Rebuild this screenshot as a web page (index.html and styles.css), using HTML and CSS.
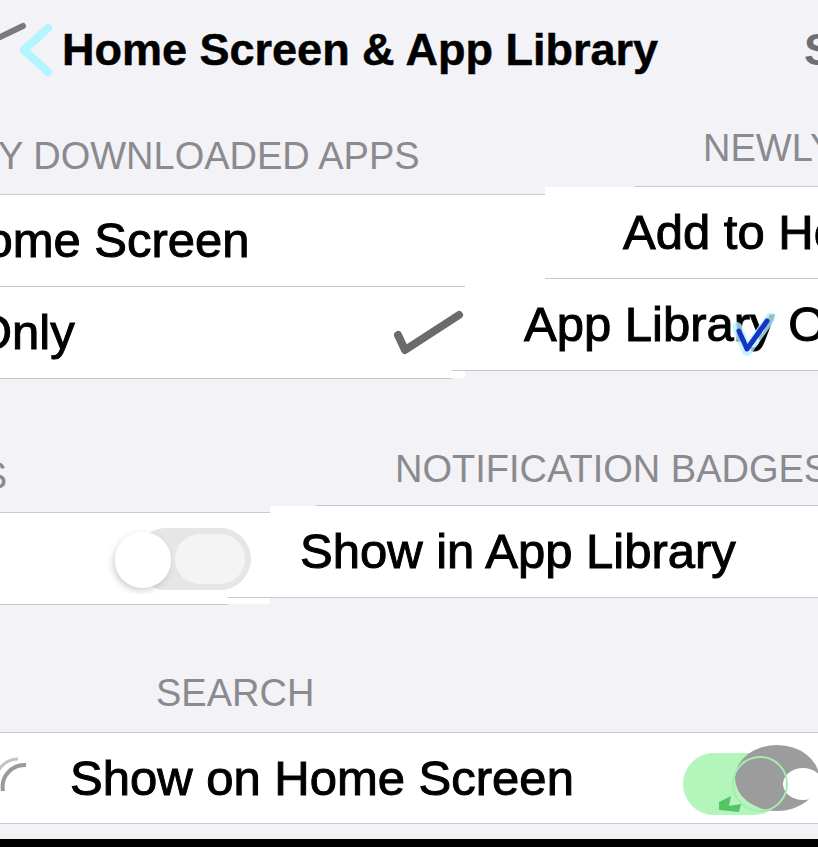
FILE: index.html
```html
<!DOCTYPE html>
<html lang="en">

<head>
    <meta charset="UTF-8">
    <meta name="viewport" content="width=device-width, initial-scale=1.0">
    <title>Home Screen &amp; App Library</title>
    <link rel="stylesheet" href="styles.css">
</head>

<body>
    <div class="screen">
        <header class="nav">
            <svg class="back" width="62" height="100" viewBox="0 0 62 100">
                <line x1="0" y1="37" x2="23" y2="26" stroke="#7a7a7e" stroke-width="6" stroke-linecap="round" />
                <polyline points="48,28 24,50 48,72" fill="none" stroke="#b2f5fc" stroke-width="8"
                    stroke-linecap="round" stroke-linejoin="round" />
            </svg>
            <h1 class="title">Home Screen &amp; App Library</h1>
            <span class="nav_edge">S</span>
        </header>

        <!-- newly downloaded apps -->
        <section class="group shift_8">
            <div class="line caption caption_first">
                <div class="half w635"><span class="label label_newly_left">NEWLY DOWNLOADED APPS</span></div>
                <div class="half right"><span class="label label_newly_right">NEWLY DOWNLOADED APPS</span></div>
            </div>
            <div class="line sep">
                <div class="half w635"></div>
                <div class="half right"></div>
            </div>
            <div class="line cell">
                <div class="half w545"><span class="cell_text home_left">Home Screen</span></div>
                <div class="half right"><span class="cell_text add_right">Add to Home Screen</span></div>
            </div>
            <div class="line sep">
                <div class="half w545"></div>
                <div class="half right"></div>
            </div>
            <div class="line cell">
                <div class="half w465">
                    <span class="cell_text only_left">Only</span>
                    <svg class="check" width="75" height="50" viewBox="0 0 75 50">
                        <polyline points="8,27 15,42 69,7" fill="none" stroke="#6b6b6e" stroke-width="8"
                            stroke-linecap="round" stroke-linejoin="round" />
                    </svg>
                </div>
                <div class="half right mark_holder">
                    <span class="cell_text library_right">App Library Only</span>
                    <svg class="blue_mark" width="42" height="44" viewBox="0 0 42 44">
                        <polyline points="4,14 14,38 38,4" fill="none" stroke="#b4f3ff" stroke-width="10"
                            stroke-linecap="round" stroke-linejoin="round" opacity="0.8" />
                        <polyline points="6,18 14,36 34,8" fill="none" stroke="#1733c4" stroke-width="5"
                            stroke-linecap="round" stroke-linejoin="round" />
                    </svg>
                </div>
            </div>
            <div class="line sep">
                <div class="half w452"></div>
                <div class="half right"></div>
            </div>
        </section>

        <!-- notification badges -->
        <section class="group shift_7">
            <div class="line caption caption_second">
                <div class="half w320"><span class="label label_badges_left">NOTIFICATION BADGES</span></div>
                <div class="half right"><span class="label label_badges_right">NOTIFICATION BADGES</span></div>
            </div>
            <div class="line sep">
                <div class="half w316"></div>
                <div class="half right"></div>
            </div>
            <div class="line cell">
                <div class="half w270">
                    <svg class="toggle_off" width="150" height="70" viewBox="0 0 150 70">
                        <defs>
                            <filter id="knob_shadow" x="-30%" y="-30%" width="160%" height="160%">
                                <feDropShadow dx="-2" dy="3" stdDeviation="3" flood-color="#000" flood-opacity="0.18" />
                            </filter>
                        </defs>
                        <rect x="30" y="4" width="116" height="62" rx="31" fill="#e6e6e8" />
                        <rect x="70" y="10" width="70" height="50" rx="25" fill="#f4f4f5" />
                        <circle cx="38" cy="36" r="28" fill="#fff" filter="url(#knob_shadow)" />
                    </svg>
                </div>
                <div class="half right"><span class="cell_text badges_right">Show in App Library</span></div>
            </div>
            <div class="line sep">
                <div class="half w228"></div>
                <div class="half right"></div>
            </div>
        </section>

        <!-- search -->
        <section class="group">
            <div class="line caption caption_third">
                <div class="half right"><span class="label label_search">SEARCH</span></div>
            </div>
            <div class="line sep">
                <div class="half right"></div>
            </div>
            <div class="line cell">
                <div class="half right">
                    <svg class="edge_arcs" width="30" height="50" viewBox="0 0 30 50">
                        <path d="M3 38 A 22 22 0 0 1 26 12" fill="none" stroke="#9a9a9c" stroke-width="4" />
                        <path d="M-4 30 A 22 22 0 0 1 18 6" fill="none" stroke="#c4c4c6" stroke-width="3" />
                    </svg>
                    <span class="cell_text search_text">Show on Home Screen</span>
                    <svg class="toggle_on" width="135" height="80" viewBox="0 0 135 80">
                        <rect x="0" y="15" width="102" height="62" rx="31" fill="#b4f5bc" />
                        <path d="M36 64 L48 58 L46 68 L58 66 L56 74 L36 72 Z" fill="#55c463" />
                        <ellipse cx="94" cy="40" rx="42" ry="33" fill="#9c9c9c" />
                        <ellipse cx="120" cy="46" rx="20" ry="16" fill="#fff" />
                        <circle cx="77" cy="46" r="27" fill="none" stroke="#a6ecae" stroke-width="2" />
                    </svg>
                </div>
            </div>
            <div class="line sep">
                <div class="half right"></div>
            </div>
        </section>

        <div class="bottom_gap"></div>
        <div class="bottom_bar"></div>
    </div>
</body>

</html>
```

FILE: styles.css
```css
body {
    margin: 0;
    background-color: #f2f2f7;
    font-family: "Liberation Sans", Arial, sans-serif;
    color: #000;
}

.screen {
    width: 818px;
    height: 847px;
    overflow: hidden;
    display: flex;
    flex-direction: column;
}

/* nav bar */
.nav {
    height: 100px;
    display: flex;
    align-items: flex-start;
    overflow: hidden;
    flex-shrink: 0;
}

.back {
    flex-shrink: 0;
}

.title {
    margin: 27px 0 0 0;
    font-size: 45px;
    line-height: 45px;
    font-weight: bold;
    white-space: nowrap;
    -webkit-text-stroke: 0.5px #000;
}

.nav_edge {
    margin: 27px -16px 0 auto;
    font-size: 45px;
    line-height: 45px;
    font-weight: bold;
    color: #6e6e72;
}

/* grouped rows */
.group {
    display: flex;
    flex-direction: column;
    flex-shrink: 0;
}

.line {
    display: flex;
}

.half {
    display: flex;
    align-items: center;
    overflow: hidden;
    white-space: nowrap;
    flex-shrink: 0;
}

.half.right {
    flex: 1;
}

.shift_8 .right {
    transform: translateY(-8px);
}

.shift_7 .right {
    transform: translateY(-7px);
}

.w635 { width: 635px; }
.w545 { width: 545px; }
.w465 { width: 465px; }
.w452 { width: 452px; }
.w320 { width: 320px; }
.w316 { width: 316px; }
.w270 { width: 270px; }
.w228 { width: 228px; }

.caption .half {
    align-items: flex-end;
}

.caption_first .half {
    height: 75px;
    padding-bottom: 19px;
}

.caption_second .half {
    height: 116px;
    padding-bottom: 17px;
}

.caption_third .half {
    height: 107px;
    padding-bottom: 20px;
}

.label {
    font-size: 38px;
    line-height: 38px;
    color: #8a8a8f;
}

.label_newly_left { margin-left: -109px; }
.label_newly_right { margin-left: 68px; }
.label_badges_left { margin-left: -427px; }
.label_badges_right { margin-left: 75px; }
.label_search { margin-left: 156px; }

.sep .half {
    height: 1px;
    background-color: #c8c7cc;
}

.cell .half {
    height: 91px;
    background-color: #fff;
}

.group:last-of-type .cell .half {
    height: 90px;
}

.cell_text {
    font-size: 49px;
    line-height: 49px;
    -webkit-text-stroke: 1px #000;
}

.home_left { margin-left: -50px; }
.add_right { margin-left: 78px; }
.only_left { margin-left: -26px; }
.library_right { margin-left: 59px; }
.badges_right { margin-left: 30px; }
.search_text { margin-left: 40px; }

.check {
    margin-left: auto;
    margin-right: 0;
    flex-shrink: 0;
}

.mark_holder {
    position: relative;
}

.blue_mark {
    position: absolute;
    left: 268px;
    top: 34px;
}

.toggle_off {
    margin-left: 105px;
    flex-shrink: 0;
}

.edge_arcs {
    flex-shrink: 0;
}

.toggle_on {
    margin-left: auto;
    flex-shrink: 0;
}

.bottom_gap {
    height: 15px;
    flex-shrink: 0;
}

.bottom_bar {
    height: 8px;
    background-color: #000;
    flex-shrink: 0;
}
```
